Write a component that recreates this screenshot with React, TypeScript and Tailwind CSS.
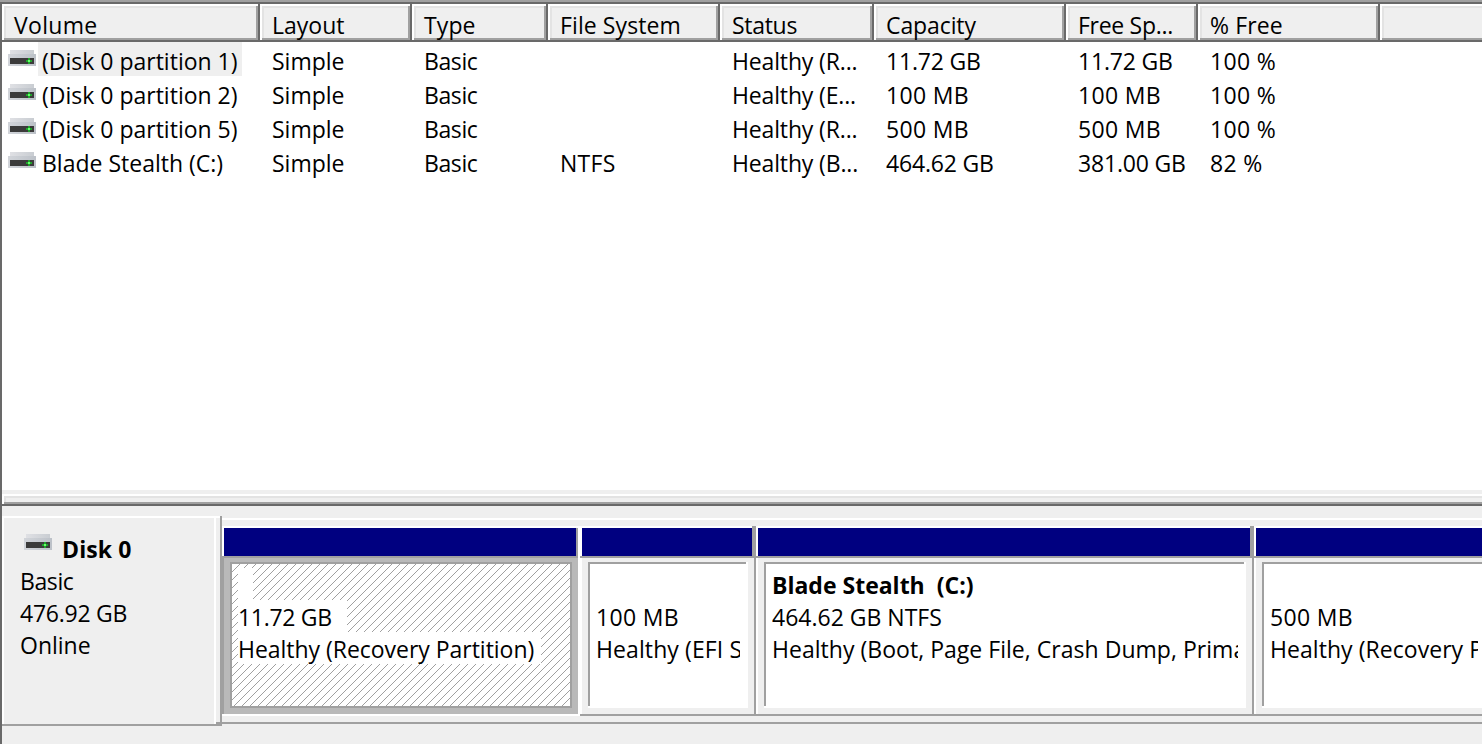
import type { ReactNode } from "react";

type Cells = [string, string, string, string, string, string, string, string];

const columns = [
  { title: "Volume", width: "w-[258px]", track: "tracking-[0.3px]" },
  { title: "Layout", width: "w-[152px]", track: "tracking-[0px]" },
  { title: "Type", width: "w-[136px]", track: "tracking-[0.1px]" },
  { title: "File System", width: "w-[172px]", track: "tracking-[0.1px]" },
  { title: "Status", width: "w-[154px]", track: "tracking-[-0.3px]" },
  { title: "Capacity", width: "w-[192px]", track: "tracking-[-0.1px]" },
  { title: "Free Sp...", width: "w-[132px]", track: "tracking-[-0.3px]" },
  { title: "% Free", width: "w-[182px]", track: "tracking-[0.1px]" },
];

const volumes: Cells[] = [
  ["(Disk 0 partition 1)", "Simple", "Basic", "", "Healthy (R...", "11.72 GB", "11.72 GB", "100 %"],
  ["(Disk 0 partition 2)", "Simple", "Basic", "", "Healthy (E...", "100 MB", "100 MB", "100 %"],
  ["(Disk 0 partition 5)", "Simple", "Basic", "", "Healthy (R...", "500 MB", "500 MB", "100 %"],
  ["Blade Stealth (C:)", "Simple", "Basic", "NTFS", "Healthy (B...", "464.62 GB", "381.00 GB", "82 %"],
];

function tracking(text: string) {
  if (text === "Basic") return "tracking-[-0.4px]";
  if (text.startsWith("Healthy")) return "tracking-[-0.15px]";
  if (text.endsWith("GB")) return "tracking-[-0.18px]";
  if (text.endsWith("MB") || text.endsWith("%")) return "tracking-[0.35px]";
  if (text === "NTFS") return "tracking-[0.3px]";
  return "tracking-[0px]";
}

const raised =
  "shadow-[inset_-2px_-2px_#696969,inset_2px_2px_#ffffff,inset_-4px_-4px_#a0a0a0,inset_4px_4px_#e3e3e3]";

function DriveIcon() {
  return (
    <svg width="28" height="16" viewBox="0 0 28 16" className="block shrink-0" shapeRendering="crispEdges">
      <defs>
        <linearGradient id="lid" x1="0" x2="1">
          <stop offset="0" stopColor="#dfe0e4" />
          <stop offset="1" stopColor="#c9cdd2" />
        </linearGradient>
        <linearGradient id="case" x1="0" x2="1">
          <stop offset="0" stopColor="#d2d5da" />
          <stop offset="1" stopColor="#bcc1c8" />
        </linearGradient>
      </defs>
      <path d="M2 0h24v4H2z" fill="url(#lid)" />
      <path d="M0 4h28v12H0z" fill="url(#case)" />
      <path d="M2 8h24v6H2z" fill="#3b3b3b" />
      <path d="M18 10h6v2h-6zM20 8h2v6h-2z" fill="#1fa32b" />
      <path d="M20 10h2v2h-2z" fill="#66ff6b" />
    </svg>
  );
}

function Header() {
  return (
    <div className="flex h-[38px] shrink-0 leading-[42px]">
      {columns.map((c) => (
        <div key={c.title} className={`shrink-0 overflow-hidden whitespace-nowrap bg-[#efefef] pl-3 ${raised} ${c.width} ${c.track}`}>
          {c.title}
        </div>
      ))}
      <div className={`w-[140px] shrink-0 bg-[#efefef] ${raised}`} />
    </div>
  );
}

function VolumeRow({ cells, selected }: { cells: Cells; selected: boolean }) {
  return (
    <div className="flex h-[34px] shrink-0 leading-[38px]">
      {cells.map((text, i) =>
        i === 0 ? (
          <div key={i} className="flex w-[258px] shrink-0 pl-1.5">
            <div className="pt-2">
              <DriveIcon />
            </div>
            <span className={`ml-0.5 h-[34px] overflow-hidden whitespace-nowrap pl-1 pr-1 ${selected ? "bg-[#efefef]" : ""}`}>
              {text}
            </span>
          </div>
        ) : (
          <div key={i} className={`h-[34px] shrink-0 overflow-hidden whitespace-nowrap pl-3 ${columns[i].width} ${tracking(text)}`}>
            {text}
          </div>
        ),
      )}
    </div>
  );
}

function Splitter() {
  return (
    <div className="h-4 shrink-0 bg-[#efefef] pt-1">
      <div className="h-3 shadow-[inset_0_-2px_#696969,inset_2px_2px_#ffffff,inset_0_-4px_#a0a0a0,inset_4px_4px_#e3e3e3]" />
    </div>
  );
}

function DiskLabel() {
  return (
    <div className="flex h-[210px] w-[218px] shrink-0">
      <div className="flex h-[210px] w-[214px] flex-col border-b-2 border-[#a0a0a0] pl-[18px] pt-4 leading-[34px] shadow-[inset_-2px_0_#ffffff,inset_2px_2px_#ffffff]">
        <div className="flex h-8">
          <div className="pl-1 pt-0.5">
            <DriveIcon />
          </div>
          <b className="pl-2.5 tracking-[0.1px]">Disk 0</b>
        </div>
        <p className="h-8 tracking-[-0.4px]">Basic</p>
        <p className="h-8 tracking-[-0.25px]">476.92 GB</p>
        <p className="h-8">Online</p>
      </div>
      <div className="h-[210px] w-1 shadow-[inset_0_-4px_#a0a0a0,inset_0_2px_#ffffff]" />
    </div>
  );
}

function Hatch({ children }: { children: ReactNode }) {
  return (
    <div className="grid h-[146px] w-[342px] border-2 border-[#a0a0a0] bg-white">
      <svg width="338" height="142" className="col-start-1 row-start-1 block" shapeRendering="crispEdges">
        <defs>
          <pattern id="hatch" width="8" height="8" patternUnits="userSpaceOnUse">
            <path
              d="M7 0h1v1h-1zM6 1h1v1h-1zM5 2h1v1h-1zM4 3h1v1h-1zM3 4h1v1h-1zM2 5h1v1h-1zM1 6h1v1h-1zM0 7h1v1h-1z"
              fill="#a0a0a0"
            />
          </pattern>
        </defs>
        <rect width="338" height="142" fill="url(#hatch)" />
      </svg>
      <div className="col-start-1 row-start-1 flex flex-col items-start pl-1.5 pt-1 leading-[34px]">{children}</div>
    </div>
  );
}

function SelectedPartition() {
  return (
    <div className="w-[358px] shrink-0">
      <div className="h-[30px] border-l-2 border-r-2 border-t-2 border-l-white border-r-white border-t-white">
        <div className="h-7 w-[354px] border-r-2 border-[#a0a0a0] bg-[#000080]" />
      </div>
      <div className="h-[160px] border-b-2 border-r-2 border-white">
        <div className="h-[158px] bg-[#b9b9b9] pl-2 pt-1.5 shadow-[inset_2px_2px_#a0a0a0]">
          <Hatch>
            <p className="h-8 w-[15px] bg-white" />
            <p className="h-8 w-[109px] bg-white tracking-[-0.3px]">11.72 GB</p>
            <p className="h-8 w-[303px] whitespace-nowrap bg-white tracking-[-0.03px]">Healthy (Recovery Partition)</p>
          </Hatch>
        </div>
      </div>
    </div>
  );
}

interface PartitionProps {
  width: string;
  name?: string;
  size: string;
  status: string;
  track: string;
}

function Partition({ width, name, size, status, track }: PartitionProps) {
  return (
    <div className={`shrink-0 ${width}`}>
      <div className="h-[30px] bg-[#000080] shadow-[inset_-4px_0_#a0a0a0,inset_2px_2px_#ffffff]" />
      <div className="h-[160px] px-2 py-1.5 shadow-[inset_-2px_-2px_#a0a0a0,inset_0_2px_#a0a0a0,inset_2px_0_#ffffff]">
        <div className="h-[146px] bg-white px-2 pt-1.5 leading-[34px] shadow-[inset_-2px_-2px_#ffffff,inset_2px_2px_#a0a0a0]">
          <div className="overflow-hidden whitespace-pre">
            <p className="h-8 font-bold tracking-[0px]">{name}</p>
            <p className={`h-8 ${tracking(size)}`}>{size}</p>
            <p className={`h-8 ${track}`}>{status}</p>
          </div>
        </div>
      </div>
    </div>
  );
}

export default function App() {
  return (
    <div className="flex h-[744px] w-[1482px] flex-col overflow-hidden border-t-2 border-[#a0a0a0] bg-[#efefef] font-['Open_Sans','Noto_Sans',sans-serif] text-[23px] text-black">
      <div className="flex min-h-0 flex-1 flex-col overflow-hidden border-l-2 border-t-2 border-[#696969]">
        <Header />
        <div className="h-[448px] shrink-0 bg-white">
          {volumes.map((cells, i) => (
            <VolumeRow key={cells[0]} cells={cells} selected={i === 0} />
          ))}
        </div>
        <Splitter />
        <div className="flex shrink-0 pt-2.5">
          <DiskLabel />
          <div className="h-[210px] w-0.5 shrink-0 bg-[#a0a0a0]" />
          <div className="mt-0.5 flex h-[206px] w-[1274px] shrink-0 border-b-2 border-t-2 border-b-[#a0a0a0] border-t-white pt-1.5">
            <SelectedPartition />
            <Partition width="w-[176px]" size="100 MB" status="Healthy (EFI S" track="tracking-[0.1px]" />
            <Partition
              width="w-[498px]"
              name="Blade Stealth  (C:)"
              size="464.62 GB NTFS"
              status="Healthy (Boot, Page File, Crash Dump, Prima"
              track="tracking-[0.03px]"
            />
            <Partition width="w-[240px]" size="500 MB" status="Healthy (Recovery P" track="tracking-[0.05px]" />
          </div>
        </div>
      </div>
    </div>
  );
}
